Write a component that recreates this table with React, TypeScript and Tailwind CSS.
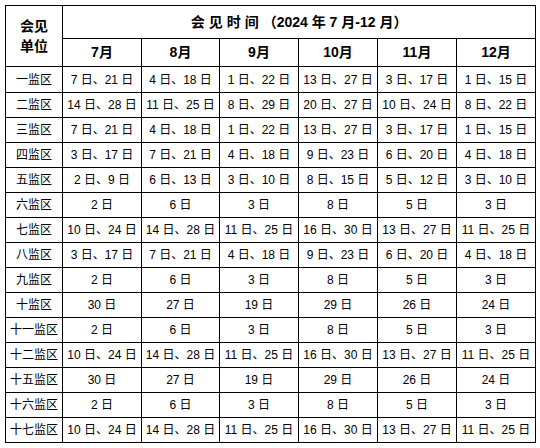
const months = ['7月', '8月', '9月', '10月', '11月', '12月'];

const A = ['7 日、21 日', '4 日、18 日', '1 日、22 日', '13 日、27 日', '3 日、17 日', '1 日、15 日'];
const D = ['3 日、17 日', '7 日、21 日', '4 日、18 日', '9 日、23 日', '6 日、20 日', '4 日、18 日'];
const S = ['2 日', '6 日', '3 日', '8 日', '5 日', '3 日'];
const T = ['30 日', '27 日', '19 日', '29 日', '26 日', '24 日'];
const Q = ['10 日、24 日', '14 日、28 日', '11 日、25 日', '16 日、30 日', '13 日、27 日', '11 日、25 日'];

const rows: { name: string; cells: string[] }[] = [
  { name: '一监区', cells: A },
  { name: '二监区', cells: ['14 日、28 日', '11 日、25 日', '8 日、29 日', '20 日、27 日', '10 日、24 日', '8 日、22 日'] },
  { name: '三监区', cells: A },
  { name: '四监区', cells: D },
  { name: '五监区', cells: ['2 日、9 日', '6 日、13 日', '3 日、10 日', '8 日、15 日', '5 日、12 日', '3 日、10 日'] },
  { name: '六监区', cells: S },
  { name: '七监区', cells: Q },
  { name: '八监区', cells: D },
  { name: '九监区', cells: S },
  { name: '十监区', cells: T },
  { name: '十一监区', cells: S },
  { name: '十二监区', cells: Q },
  { name: '十五监区', cells: T },
  { name: '十六监区', cells: S },
  { name: '十七监区', cells: Q },
];

const widths = [57, 79, 78, 79, 79, 79, 79];

export default function App() {
  return (
    <div className="w-[540px] h-[448px] bg-white pl-[5px] pt-[5px] font-['Liberation_Sans','Noto_Sans_CJK_SC',sans-serif] text-black">
      <table className="border-collapse table-fixed w-[530px]">
        <colgroup>
          {widths.map((w, i) => (
            <col key={i} style={{ width: w }} />
          ))}
        </colgroup>
        <thead>
          <tr className="h-[33px]">
            <th rowSpan={2} className="border border-black text-[14px] font-bold leading-[20px] p-0">
              会见
              <br />
              单位
            </th>
            <th colSpan={6} className="border border-black text-[14px] font-bold p-0">
              <span className="tracking-[4px]">会见时间</span>（2024 年 7 月-12 月）
            </th>
          </tr>
          <tr className="h-[28px]">
            {months.map((m) => (
              <th key={m} className="border border-black text-[14px] font-bold p-0">
                {m}
              </th>
            ))}
          </tr>
        </thead>
        <tbody>
          {rows.map((r, i) => (
            <tr key={r.name} className={i === 0 ? 'h-[26px]' : 'h-[25px]'}>
              <td className="border border-black text-[12px] text-center p-0 whitespace-nowrap">{r.name}</td>
              {r.cells.map((c, j) => (
                <td key={j} className="border border-black text-[12px] text-center p-0 whitespace-nowrap">
                  {c}
                </td>
              ))}
            </tr>
          ))}
        </tbody>
      </table>
    </div>
  );
}
